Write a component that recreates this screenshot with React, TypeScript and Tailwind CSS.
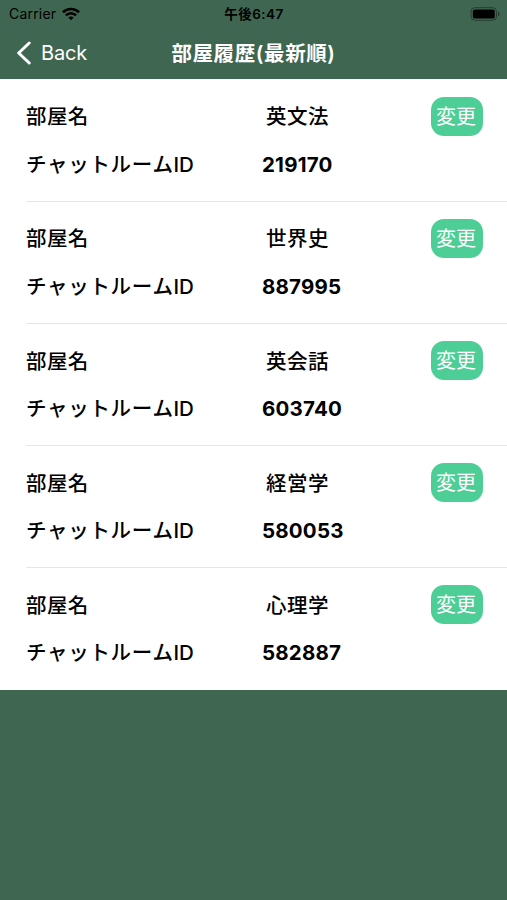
interface Room {
    id: string
    name: string
}

const rooms: Room[] = [
    { id: '219170', name: '英文法' },
    { id: '887995', name: '世界史' },
    { id: '603740', name: '英会話' },
    { id: '580053', name: '経営学' },
    { id: '582887', name: '心理学' },
]

function StatusBar() {
    return (
        <div className="grid h-[27px] grid-cols-3 items-center pl-[9px] pr-[6px] text-black">
            <div className="flex items-center gap-[6px]">
                <span className="text-[14px] tracking-[0.2px]">Carrier</span>
                <svg width="18" height="14" viewBox="0 0 19 14" fill="none" stroke="currentColor" strokeWidth="2.7">
                    <path d="M1 5.2C5.8 0.6 13.2 0.6 18 5.2" />
                    <path d="M4.1 8.4C7.1 5.4 11.9 5.4 14.9 8.4" />
                    <path d="M9.5 13.5L6.7 10.7C8.3 9.2 10.7 9.2 12.3 10.7Z" fill="currentColor" stroke="none" />
                </svg>
            </div>
            <span className="-ml-[2px] pt-px text-center text-[13.5px] font-semibold tracking-[0.5px]">午後6:47</span>
            <svg className="justify-self-end" width="31" height="14" viewBox="0 0 31 14">
                <rect x="1" y="0.7" width="25.5" height="12.6" rx="3.8" fill="none" stroke="black" strokeOpacity="0.4" />
                <rect x="2.8" y="2.4" width="22" height="9.2" rx="2.2" fill="black" />
                <path d="M28 4.6C30 5.4 30 8.6 28 9.4Z" fill="black" fillOpacity="0.45" />
            </svg>
        </div>
    )
}

function NavBar() {
    return (
        <div className="grid h-[52px] grid-cols-[160px_1fr_160px] items-center text-white">
            <button className="flex items-center gap-[9px] pl-[16px]">
                <svg width="16" height="24" viewBox="0 0 16 24" fill="none" stroke="currentColor" strokeWidth="3" strokeLinecap="round" strokeLinejoin="round">
                    <path d="M13.2 2L2.7 12L13.2 22" />
                </svg>
                <span className="text-[20px] leading-6 tracking-[-0.2px]">Back</span>
            </button>
            <h1 className="whitespace-nowrap pt-[2px] text-center text-[20.5px] font-semibold tracking-[0.6px]">部屋履歴(最新順)</h1>
        </div>
    )
}

function RoomRow({ room }: { room: Room }) {
    return (
        <li className="ml-[26px] h-[122.2px] border-b border-[#e6e6e6] pt-[17px] last:border-b-0">
            <div className="flex h-[39px] items-center">
                <span className="w-[240px] pt-[3px] text-[20.5px] font-medium tracking-[0.4px]">部屋名</span>
                <span className="w-[165px] pt-[3px] text-[20.5px] font-medium tracking-[0.5px]">{room.name}</span>
                <button className="h-[39px] w-[52px] rounded-[13px] bg-[#4dce96] pr-[2px] pt-px text-[20px] text-white">
                    変更
                </button>
            </div>
            <div className="mt-[15.6px] flex h-[28px] items-center">
                <span className="w-[236px] whitespace-nowrap text-[20.5px] font-medium tracking-[0.7px]">
                    チャットルーム<span className="tracking-[-0.1px]">ID</span>
                </span>
                <span className="text-[20.5px] font-bold tracking-[0.2px]">{room.id}</span>
            </div>
        </li>
    )
}

export default function App() {
    return (
        <div className="min-h-[900px] w-[507px] bg-[#3f6650] font-['Inter','Noto_Sans_CJK_JP',sans-serif] text-black" lang="ja">
            <header>
                <StatusBar />
                <NavBar />
            </header>
            <ul className="bg-white pt-[0.5px]">
                {rooms.map((room) => (
                    <RoomRow key={room.id} room={room} />
                ))}
            </ul>
        </div>
    )
}
